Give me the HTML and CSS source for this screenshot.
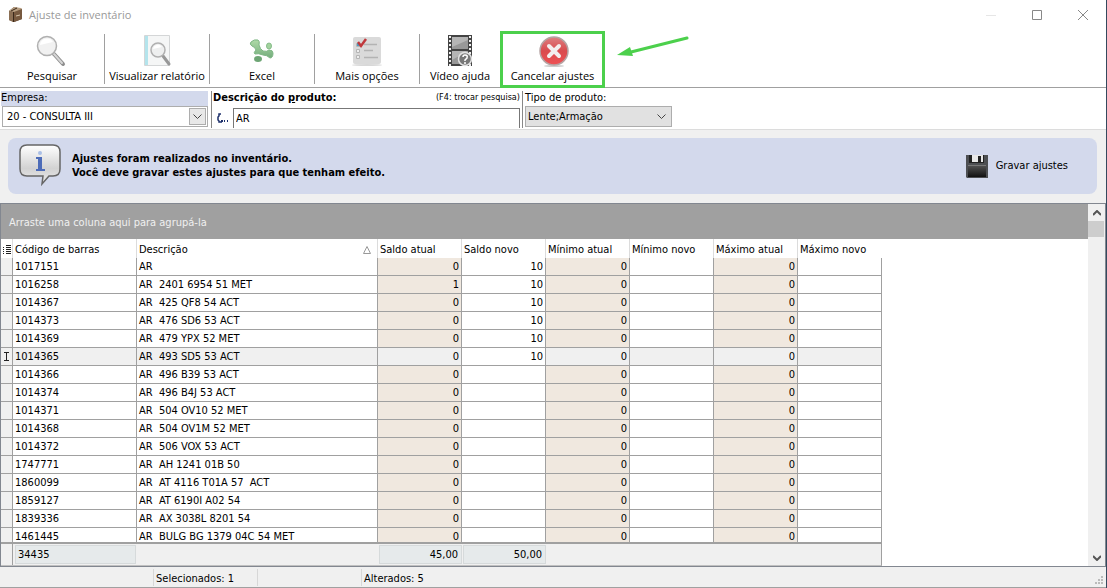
FILE: index.html
```
<!DOCTYPE html>
<html lang="pt-BR">
<head>
    <meta charset="UTF-8">
    <meta name="viewport" content="width=device-width, initial-scale=1.0">
    <title>Ajuste de inventário</title>
    <link rel="stylesheet" href="styles.css">
</head>
<body>
    <header class="titlebar">
        <svg class="appicon" width="16" height="16" viewBox="0 0 16 16">
            <path d="M1 4L6 0L14 2L14 12L6 15L1 13Z" fill="#5d4430"/>
            <path d="M1 4L5 5L5 15L1 13Z" fill="#8b6f54"/>
            <path d="M6 5L14 2L14 12L6 15Z" fill="#77593f"/>
            <path d="M1 4L6 0L13 1L14 2L6 5Z" fill="#b9a083"/>
            <path d="M8 9L12 8" stroke="#d9c7ae" fill="none"/>
            <path d="M5.500 5V15M9 1L3 4" stroke="#3a281a" fill="none"/>
        </svg>
        <h1>Ajuste de inventário</h1>
        <div class="winbtns">
            <button type="button" aria-label="Minimizar"><svg width="10" height="10"><path d="M0 5.5H10" stroke="#e6e6e6"/></svg></button>
            <button type="button" aria-label="Maximizar"><svg width="10" height="10"><path d="M.5 .5H9.5V9.5H.5Z" stroke="#888" fill="none"/></svg></button>
            <button type="button" aria-label="Fechar"><svg width="10" height="10"><path d="M0 0L10 10M10 0L0 10" stroke="#888"/></svg></button>
        </div>
    </header>

    <nav class="toolbar">
        <button type="button" class="tool">
            <svg width="32" height="32" viewBox="0 0 32 32">
                <path d="M18 19L27 29" stroke="#8e8e8e" stroke-width="4" stroke-linecap="round"/>
                <path d="M18 19L26 28" stroke="#d6d6d6" stroke-width="2" stroke-linecap="round"/>
                <circle cx="11" cy="11" r="9.500" fill="#f1f1f1" stroke="#b0b0b0" stroke-width="1.500"/>
                <path d="M4 10A7 7 0 0 1 17 7Q12 8 4 10Z" fill="#fff"/>
            </svg>
            Pesquisar
        </button>
        <button type="button" class="tool">
            <svg width="32" height="32" viewBox="0 0 32 32">
                <path d="M3.500 .5H28.500V30.500H3.500Z" fill="#f5f6f6" stroke="#d4d6d7"/>
                <path d="M4 1H7V30H4Z" fill="#b4e4ec"/>
                <path d="M22 21L28 29" stroke="#989898" stroke-width="3" stroke-linecap="round"/>
                <circle cx="17" cy="15" r="7" fill="#eeefef" stroke="#b0b0b0" stroke-width="1.500"/>
                <path d="M12 14A5 5 0 0 1 21 12Z" fill="#fff"/>
            </svg>
            Visualizar relatório
        </button>
        <button type="button" class="tool">
            <svg width="32" height="32" viewBox="0 0 32 32">
                <defs>
                    <linearGradient id="green" x1="0" y1="0" x2="0" y2="1">
                        <stop offset="0" stop-color="#b0dba8"/>
                        <stop offset="1" stop-color="#74ad7c"/>
                    </linearGradient>
                </defs>
                <path d="M5 7Q8 4 12 5Q14 6 13 10Q14 14 17 16Q21 17 23 15Q27 15 27 18Q27 23 24 23Q21 20 17 20Q12 18 9 19Q7 18 10 15Q9 12 6 11Q3 9 5 7Z" fill="url(#green)" stroke="#7fb785"/>
                <ellipse cx="23" cy="11" rx="2.500" ry="3" fill="#a3d39e" stroke="#86bd8a"/>
                <ellipse cx="12" cy="24" rx="4" ry="3" fill="#6da574"/>
            </svg>
            Excel
        </button>
        <button type="button" class="tool">
            <svg width="32" height="32" viewBox="0 0 32 32">
                <ellipse cx="16" cy="30" rx="15" ry="1" fill="#d8d8d8"/>
                <rect x="2" y="2" width="28" height="27" rx="2" fill="#dadada"/>
                <path d="M13 9.500H26M13 15.500H22M13 22.500H27" stroke="#b3b3b3" stroke-width="1.500"/>
                <path d="M5.500 8.500H9V11.500H5.500ZM5.500 14.500H8.500V17.500H5.500ZM5.500 20.500H8.500V23.500H5.500Z" stroke="#b5b5b5" fill="#eee"/>
                <path d="M6 8H9V11H6Z" fill="#4a9fc4"/>
                <path d="M7 7L10 11L15 4" stroke="#c0383c" stroke-width="2.500" fill="none"/>
            </svg>
            Mais opções
        </button>
        <button type="button" class="tool tool-video">
            <svg width="32" height="32" viewBox="0 0 32 32">
                <path d="M4 0H28V31H4Z" fill="#444"/>
                <path d="M8 2H24V14H8ZM8 16H24V29H8Z" fill="#989898"/>
                <path d="M8 2H24V5L8 12ZM8 16H24L8 25Z" fill="#b5b5b5"/>
                <path d="M6 1V31M26 1V31" stroke="#f0f0f0" stroke-width="2" stroke-dasharray="2 2"/>
                <circle cx="21" cy="24" r="6.500" fill="#777" stroke="#e2e2e2" stroke-width="1.500"/>
                <path d="M19 22Q19 20 21 20Q24 20 23 23L21 25V26M21 27V29" stroke="#fff" stroke-width="1.500" fill="none"/>
            </svg>
            Vídeo ajuda
        </button>
        <button type="button" class="tool tool-cancel">
            <svg width="32" height="32" viewBox="0 0 32 32">
                <defs>
                    <linearGradient id="red" x1="0" y1="0" x2="0" y2="1">
                        <stop offset="0" stop-color="#dd7f81"/>
                        <stop offset=".5" stop-color="#d94b4e"/>
                        <stop offset="1" stop-color="#ef5154"/>
                    </linearGradient>
                </defs>
                <ellipse cx="17" cy="31" rx="10" ry="1" fill="#ccc"/>
                <circle cx="17" cy="16" r="14" fill="url(#red)" stroke="#b5a3a3" stroke-width="1.500"/>
                <path d="M12 11L22 21M22 11L12 21" stroke="#f3eeee" stroke-width="4" stroke-linecap="round"/>
            </svg>
            Cancelar ajustes
        </button>
        <svg class="arrow" width="74" height="24" viewBox="0 0 74 24">
            <path d="M70 3L14 17" stroke="#4cd04c" stroke-width="3" stroke-linecap="round"/>
            <path d="M0 20L13 12L16 21Z" fill="#4cd04c"/>
        </svg>
    </nav>

    <form class="filters" autocomplete="off">
        <div class="field company">
            <label for="empresa">Empresa:</label>
            <div class="selectbox">
                <select id="empresa"><option>20 - CONSULTA III</option></select>
                <span class="drop"><svg width="9" height="6"><path d="M.5 .5L4.500 4.500L8.500 .5" stroke="#444" fill="none"/></svg></span>
            </div>
        </div>
        <div class="field product">
            <div class="labels">
                <label for="produto">Descrição do <u>p</u>roduto:</label>
                <span class="hint">(F4: trocar pesquisa)</span>
            </div>
            <div class="search">
                <svg width="12" height="12" viewBox="0 0 12 12">
                    <path d="M4 2H2V4L1 5V8L2 9V10H5" stroke="#1c2f6b" stroke-width="1.500" fill="none"/>
                    <path d="M4 8H6V10H4ZM7 8H8V10H7ZM10 8H11V10H10Z" fill="#1c2f6b"/>
                </svg>
                <input id="produto" type="text" value="AR">
            </div>
        </div>
        <div class="field kind">
            <label for="tipo">Tipo de produto:</label>
            <div class="selectbox">
                <select id="tipo"><option>Lente;Armação</option></select>
                <span class="drop"><svg width="9" height="6"><path d="M.5 .5L4.500 4.500L8.500 .5" stroke="#444" fill="none"/></svg></span>
            </div>
        </div>
    </form>

    <section class="notice">
        <svg width="44" height="44" viewBox="0 0 44 44">
            <defs>
                <linearGradient id="bubble" x1="0" y1="0" x2="0" y2="1">
                    <stop offset="0" stop-color="#fff"/>
                    <stop offset=".6" stop-color="#d2d2d2"/>
                    <stop offset="1" stop-color="#ececec"/>
                </linearGradient>
            </defs>
            <path d="M9 1H35Q42 1 42 8V25Q42 32 35 32H31L24 40L25 32H9Q2 32 2 25V8Q2 1 9 1Z" fill="url(#bubble)" stroke="#666" stroke-width="1.500"/>
            <circle cx="22" cy="9" r="2" fill="#a9bfe6"/>
            <path d="M18 13H24V25H27V27H18V25H20V15H18Z" fill="#4d6cb8"/>
        </svg>
        <p>Ajustes foram realizados no inventário.<br>Você deve gravar estes ajustes para que tenham efeito.</p>
        <button type="button" class="save">
            <svg width="22" height="24" viewBox="0 0 22 24">
                <defs>
                    <linearGradient id="disk" x1="0" y1="0" x2="0" y2="1">
                        <stop offset="0" stop-color="#555"/>
                        <stop offset="1" stop-color="#111"/>
                    </linearGradient>
                </defs>
                <path d="M0 1H22V24H1L0 23Z" fill="#4d4f52"/>
                <path d="M3 1H18V9H3Z" fill="#222"/>
                <path d="M6 1H17V8H6Z" fill="#e9e9e9"/>
                <path d="M12 2H15V8H12Z" fill="#222"/>
                <path d="M2 11H20V23H2Z" fill="url(#disk)"/>
                <path d="M2 11.500H20" stroke="#777"/>
            </svg>
            Gravar ajustes
        </button>
    </section>

    <main class="grid">
        <div class="view">
            <div class="groupby">Arraste uma coluna aqui para agrupá-la</div>
            <div class="rows">
                <table>
                    <colgroup><col class="c-ind"><col class="c-code"><col class="c-desc"><col span="6" class="c-num"></colgroup>
                    <thead>
                        <tr>
                            <th><svg width="8" height="9"><path d="M3 .5H8M3 2.500H8M3 4.500H8M3 6.500H8M3 8.500H8M0 2.500H1M0 4.500H1M0 6.500H1M0 8.500H1" stroke="#222"/></svg></th>
                            <th>Código de barras</th>
                            <th><span class="sorted">Descrição <svg width="8" height="8"><path d="M4 .5L7.500 7.500H.5Z" fill="none" stroke="#999"/></svg></span></th>
                            <th>Saldo atual</th><th>Saldo novo</th><th>Mínimo atual</th><th>Mínimo novo</th><th>Máximo atual</th><th>Máximo novo</th>
                        </tr>
                    </thead>
                    <tbody>
                        <tr><td></td><td>1017151</td><td>AR</td><td>0</td><td>10</td><td>0</td><td></td><td>0</td><td></td></tr>
                        <tr><td></td><td>1016258</td><td>AR  2401 6954 51 MET</td><td>1</td><td>10</td><td>0</td><td></td><td>0</td><td></td></tr>
                        <tr><td></td><td>1014367</td><td>AR  425 QF8 54 ACT</td><td>0</td><td>10</td><td>0</td><td></td><td>0</td><td></td></tr>
                        <tr><td></td><td>1014373</td><td>AR  476 SD6 53 ACT</td><td>0</td><td>10</td><td>0</td><td></td><td>0</td><td></td></tr>
                        <tr><td></td><td>1014369</td><td>AR  479 YPX 52 MET</td><td>0</td><td>10</td><td>0</td><td></td><td>0</td><td></td></tr>
                        <tr class="current"><td><svg width="5" height="9"><path d="M0 .5H5M0 8.500H5M2.500 0V9" stroke="#222"/></svg></td><td>1014365</td><td>AR  493 SD5 53 ACT</td><td>0</td><td class="edit">10</td><td>0</td><td></td><td>0</td><td></td></tr>
                        <tr><td></td><td>1014366</td><td>AR  496 B39 53 ACT</td><td>0</td><td></td><td>0</td><td></td><td>0</td><td></td></tr>
                        <tr><td></td><td>1014374</td><td>AR  496 B4J 53 ACT</td><td>0</td><td></td><td>0</td><td></td><td>0</td><td></td></tr>
                        <tr><td></td><td>1014371</td><td>AR  504 OV10 52 MET</td><td>0</td><td></td><td>0</td><td></td><td>0</td><td></td></tr>
                        <tr><td></td><td>1014368</td><td>AR  504 OV1M 52 MET</td><td>0</td><td></td><td>0</td><td></td><td>0</td><td></td></tr>
                        <tr><td></td><td>1014372</td><td>AR  506 VOX 53 ACT</td><td>0</td><td></td><td>0</td><td></td><td>0</td><td></td></tr>
                        <tr><td></td><td>1747771</td><td>AR  AH 1241 01B 50</td><td>0</td><td></td><td>0</td><td></td><td>0</td><td></td></tr>
                        <tr><td></td><td>1860099</td><td>AR  AT 4116 T01A 57  ACT</td><td>0</td><td></td><td>0</td><td></td><td>0</td><td></td></tr>
                        <tr><td></td><td>1859127</td><td>AR  AT 6190I A02 54</td><td>0</td><td></td><td>0</td><td></td><td>0</td><td></td></tr>
                        <tr><td></td><td>1839336</td><td>AR  AX 3038L 8201 54</td><td>0</td><td></td><td>0</td><td></td><td>0</td><td></td></tr>
                        <tr><td></td><td>1461445</td><td>AR  BULG BG 1379 04C 54 MET</td><td>0</td><td></td><td>0</td><td></td><td>0</td><td></td></tr>
                    </tbody>
                </table>
            </div>
            <div class="totals">
                <span class="ind"></span>
                <span class="total count">34435</span>
                <span class="total">45,00</span>
                <span class="total">50,00</span>
            </div>
        </div>
        <div class="scrollbar">
            <button type="button" aria-label="Subir"><svg width="8" height="6"><path d="M0 5L4 1L8 5" stroke="#555" stroke-width="2" fill="none"/></svg></button>
            <div class="thumb"></div>
            <button type="button" class="down" aria-label="Descer"><svg width="8" height="6"><path d="M0 1L4 5L8 1" stroke="#555" stroke-width="2" fill="none"/></svg></button>
        </div>
    </main>

    <footer class="status">
        <span class="pane first"></span>
        <span class="pane">Selecionados: 1</span>
        <span class="pane">Alterados: 5</span>
        <svg width="8" height="8"><path d="M6 0H8V2H6ZM3 3H5V5H3ZM6 3H8V5H6ZM0 6H2V8H0ZM3 6H5V8H3ZM6 6H8V8H6Z" fill="#bbb"/></svg>
    </footer>
</body>
</html>
```
FILE: styles.css
```
*{
    box-sizing: border-box;
}

body{
    margin: 0;
    height: 100vh;
    display: flex;
    flex-direction: column;
    overflow: hidden;
    background-color: #f0f0f0;
    border-right: 1px solid #34495e;
    color: black;
    font: 11px/14px "DejaVu Sans Condensed", Tahoma, sans-serif;
}

button{
    border: none;
    padding: 0;
    background: none;
    color: inherit;
    font: inherit;
}

svg{
    display: block;
    flex: none;
}

/* title bar */
.titlebar{
    display: flex;
    align-items: center;
    height: 29px;
    flex: none;
    padding-left: 8px;
    gap: 5px;
    background-color: white;
}
.titlebar h1{
    margin: 0;
    flex: 1;
    font: 11px/16px "Open Sans", "Segoe UI", sans-serif;
    color: #999;
}
.winbtns{
    display: flex;
}
.winbtns button{
    width: 46px;
    height: 28px;
    display: flex;
    align-items: center;
    justify-content: center;
}

/* toolbar */
.toolbar{
    display: flex;
    align-items: flex-start;
    height: 59px;
    flex: none;
    padding-top: 2px;
    background-color: white;
    border-bottom: 1px solid #a0a0a0;
}
.tool{
    display: flex;
    flex-direction: column;
    align-items: center;
    width: 105px;
    height: 50px;
    margin-top: 3px;
    padding-top: 1px;
    gap: 1px;
    border-right: 1px solid #a0a0a0;
    font: 11px/16px "Open Sans", "Segoe UI", sans-serif;
    white-space: nowrap;
}
.tool-video{
    width: 80px;
    border-right: none;
}
.tool-cancel{
    height: 57px;
    margin-top: 0;
    border: 3px solid #4cd04c;
}
.arrow{
    margin: 4px 0 0 12px;
}

/* filters */
.filters{
    display: flex;
    height: 42px;
    flex: none;
    padding: 3px 0 1px 1px;
    background-color: white;
    border-bottom: 1px solid #dcdcdc;
}
.field label{
    display: block;
    height: 15px;
}
.company{
    width: 207px;
}
.company label{
    background-color: #d3d9ec;
}
.selectbox{
    position: relative;
    height: 21px;
}
.selectbox select{
    appearance: none;
    width: 100%;
    height: 21px;
    padding: 0 2px;
    border: 1px solid #adadad;
    border-radius: 0;
    background-color: white;
    color: black;
    font: inherit;
}
.company .selectbox{
    margin: 0 0 0 1px;
}
.company select{
    padding-left: 4px;
}
.drop{
    position: absolute;
    top: 2px;
    right: 2px;
    width: 17px;
    height: 17px;
    display: flex;
    align-items: center;
    justify-content: center;
    pointer-events: none;
}
.company .drop{
    border: 1px solid #adadad;
    background-color: #e8e8e8;
}
.product{
    width: 312px;
    margin-left: 3px;
    padding-left: 1px;
    border-left: 1px solid #888;
    border-right: 1px solid #888;
}
.labels{
    display: flex;
    justify-content: space-between;
}
.labels label{
    font-weight: bold;
}
.hint{
    font-size: 9px;
    line-height: 12px;
    padding-right: 2px;
}
.search{
    display: flex;
    align-items: center;
    gap: 4px;
    padding: 2px 2px 0 4px;
}
.search input{
    flex: 1;
    min-width: 0;
    height: 20px;
    padding: 0 2px;
    border: 1px solid #777;
    border-bottom: none;
    font: inherit;
}
.kind{
    width: 149px;
    padding-left: 2px;
}
.kind select{
    background-color: #e1e1e1;
}

/* notice */
.notice{
    display: flex;
    align-items: center;
    height: 56px;
    flex: none;
    margin: 8px 9px 9px 8px;
    padding: 0 29px 0 10px;
    gap: 10px;
    border-radius: 8px;
    background-color: #d3d9ec;
}
.notice p{
    flex: 1;
    margin: 0;
    font-weight: bold;
}
.save{
    display: flex;
    align-items: center;
    gap: 8px;
}

/* grid */
.grid{
    display: flex;
    flex: 1;
    min-height: 0;
    border: 1px solid #828790;
    background-color: white;
}
.view{
    flex: 1;
    min-width: 0;
    display: flex;
    flex-direction: column;
}
.groupby{
    height: 35px;
    flex: none;
    padding-left: 8px;
    line-height: 38px;
    background-color: #a0a0a0;
    color: #f0f0f0;
}
.rows{
    flex: 1;
    min-height: 0;
    overflow: hidden;
}
table{
    table-layout: fixed;
    width: 881px;
    border-collapse: separate;
    border-spacing: 0;
}
.c-ind{
    width: 12px;
}
.c-code{
    width: 124px;
}
.c-desc{
    width: 241px;
}
.c-num{
    width: 84px;
}
th{
    height: 19px;
    padding: 2px 2px 0;
    border-right: 1px solid #dcdcdc;
    font-weight: normal;
    text-align: left;
    white-space: nowrap;
}
th:last-child{
    border-right: none;
}
.sorted{
    display: flex;
    align-items: center;
    justify-content: space-between;
    padding-right: 4px;
}
td{
    height: 18px;
    padding: 1px 2px 0;
    border-right: 1px solid #a0a0a0;
    border-bottom: 1px solid #a0a0a0;
    line-height: 16px;
    text-align: right;
    white-space: pre;
}
td:nth-child(1){
    padding: 0 3px;
    background-color: #f0f0f0;
}
td:nth-child(2), td:nth-child(3){
    text-align: left;
}
td:nth-child(4), td:nth-child(6), td:nth-child(8){
    background-color: #f0e8df;
}
tr.current td{
    background-color: #f0f0f0;
}
tr.current td.edit{
    background-color: white;
}
.totals{
    display: flex;
    align-items: center;
    width: 881px;
    height: 24px;
    flex: none;
    gap: 1px;
    border-top: 2px solid #a0a0a0;
    border-right: 1px solid #a0a0a0;
    border-bottom: 1px solid #c0c0c0;
    background-color: #f0f0f0;
}
.ind{
    width: 12px;
    height: 21px;
    border-right: 1px solid #a0a0a0;
}
.total{
    width: 83px;
    height: 19px;
    padding: 0 3px;
    border: 1px solid #d6dadb;
    background-color: #e6eaeb;
    line-height: 18px;
    text-align: right;
}
.count{
    width: 121px;
    margin: 0 242px 0 1px;
    padding: 0 2px;
    text-align: left;
}
.scrollbar{
    width: 17px;
    display: flex;
    flex-direction: column;
    background-color: #f0f0f0;
}
.scrollbar button{
    height: 17px;
    display: flex;
    align-items: center;
    justify-content: center;
}
.thumb{
    height: 16px;
    margin-right: 1px;
    background-color: #cdcdcd;
}
.scrollbar .down{
    margin-top: auto;
}

/* status bar */
.status{
    display: flex;
    align-items: center;
    height: 21px;
    flex: none;
    padding: 1px 3px 1px 0;
    border-bottom: 1px solid #a0a0a0;
}
.pane{
    width: 105px;
    height: 17px;
    padding-left: 2px;
    border-left: 1px solid #d7d7d7;
    line-height: 19px;
    white-space: nowrap;
}
.first{
    width: 153px;
    border: none;
}
.pane:nth-child(2){
    border-right: 1px solid #d7d7d7;
}
.pane:nth-child(3){
    margin-left: 103px;
}
.status svg{
    margin: 6px 0 0 auto;
}
```
